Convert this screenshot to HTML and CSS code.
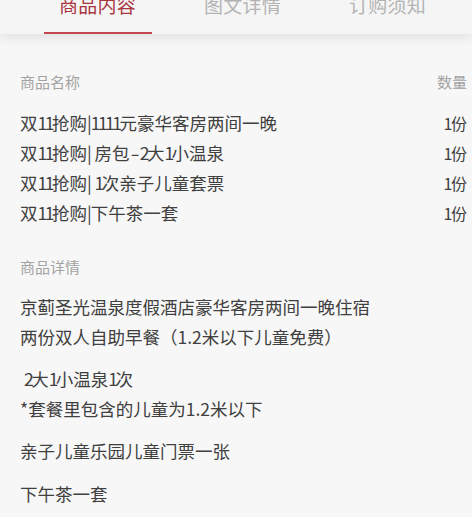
FILE: index.html
```html
<!DOCTYPE html>
<html lang="zh">
<head>
<meta charset="utf-8">
<link rel="stylesheet" href="styles.css">
</head>
<body>
<nav class="tabs">
  <div class="tab active"><span class="label">商品内容</span></div>
  <div class="tab"><span class="label">图文详情</span></div>
  <div class="tab"><span class="label">订购须知</span></div>
</nav>
<main class="content">
  <div class="head-row">
    <span>商品名称</span>
    <span>数量</span>
  </div>
  <ul class="items">
    <li><span>双<span class="num">11</span>抢购<span class="bar">|</span><span class="num">1111</span>元豪华客房两间一晚</span><span class="qty"><span class="num">1</span>份</span></li>
    <li><span>双<span class="num">11</span>抢购<span class="bar">|</span> 房包<span class="dash">-</span><span class="num">2</span>大<span class="num">1</span>小温泉</span><span class="qty"><span class="num">1</span>份</span></li>
    <li><span>双<span class="num">11</span>抢购<span class="bar">|</span> <span class="num">1</span>次亲子儿童套票</span><span class="qty"><span class="num">1</span>份</span></li>
    <li><span>双<span class="num">11</span>抢购<span class="bar">|</span>下午茶一套</span><span class="qty"><span class="num">1</span>份</span></li>
  </ul>
  <div class="head-row detail-head"><span>商品详情</span></div>
  <div class="details">
    <p>京蓟圣光温泉度假酒店豪华客房两间一晚住宿<br>两份双人自助早餐（1.2米以下儿童免费）</p>
    <p>&nbsp;<span class="num">2</span>大<span class="num">1</span>小温泉<span class="num">1</span>次<br>*套餐里包含的儿童为1.2米以下</p>
    <p>亲子儿童乐园儿童门票一张</p>
    <p>下午茶一套</p>
  </div>
</main>
</body>
</html>
```

FILE: styles.css
```css
html, body {
  margin: 0;
  padding: 0;
  background: #f7f7f7;
  font-family: "Noto Sans CJK SC", "Noto Sans", sans-serif;
}
.tabs {
  display: flex;
  height: 34px;
  padding-left: 25px;
  background: #f5f5f5;
  box-shadow: 0 4px 12px rgba(0,0,0,0.09);
  position: relative;
}
.tab {
  width: 145px;
  display: flex;
  flex-direction: column;
  align-items: center;
  position: relative;
}
.label {
  font-size: 19px;
  line-height: 20px;
  margin-top: -5px;
  color: #b3b3b3;
  letter-spacing: 0.3px;
}
.tab.active .label {
  color: #a9363e;
}
.tab.active::after {
  content: "";
  position: absolute;
  left: 19px;
  right: 18px;
  bottom: 0;
  height: 2px;
  background: #c0484e;
}
.content {
  padding: 0 5px 0 20px;
  color: #404040;
}
.head-row {
  display: flex;
  justify-content: space-between;
  font-size: 15px;
  line-height: 20px;
  color: #a3a3a3;
  margin-top: 38px;
}
.items {
  list-style: none;
  margin: 16px 0 0;
  padding: 0;
}
.items li {
  display: flex;
  justify-content: space-between;
  font-size: 17.5px;
  line-height: 30px;
  white-space: pre;
}
.num {
  letter-spacing: -2.5px;
}
.bar {
  letter-spacing: -1px;
}
.dash {
  display: inline-block;
  transform: scaleX(1.5);
  margin: 0 2px;
}
.qty {
  font-size: 16px;
}
.qty .num {
  letter-spacing: -1.5px;
}
.detail-head {
  margin-top: 29px;
}
.details {
  margin-top: 15px;
  font-size: 17.5px;
  line-height: 29.5px;
}
.details p {
  margin: 0 0 13px;
}
```
